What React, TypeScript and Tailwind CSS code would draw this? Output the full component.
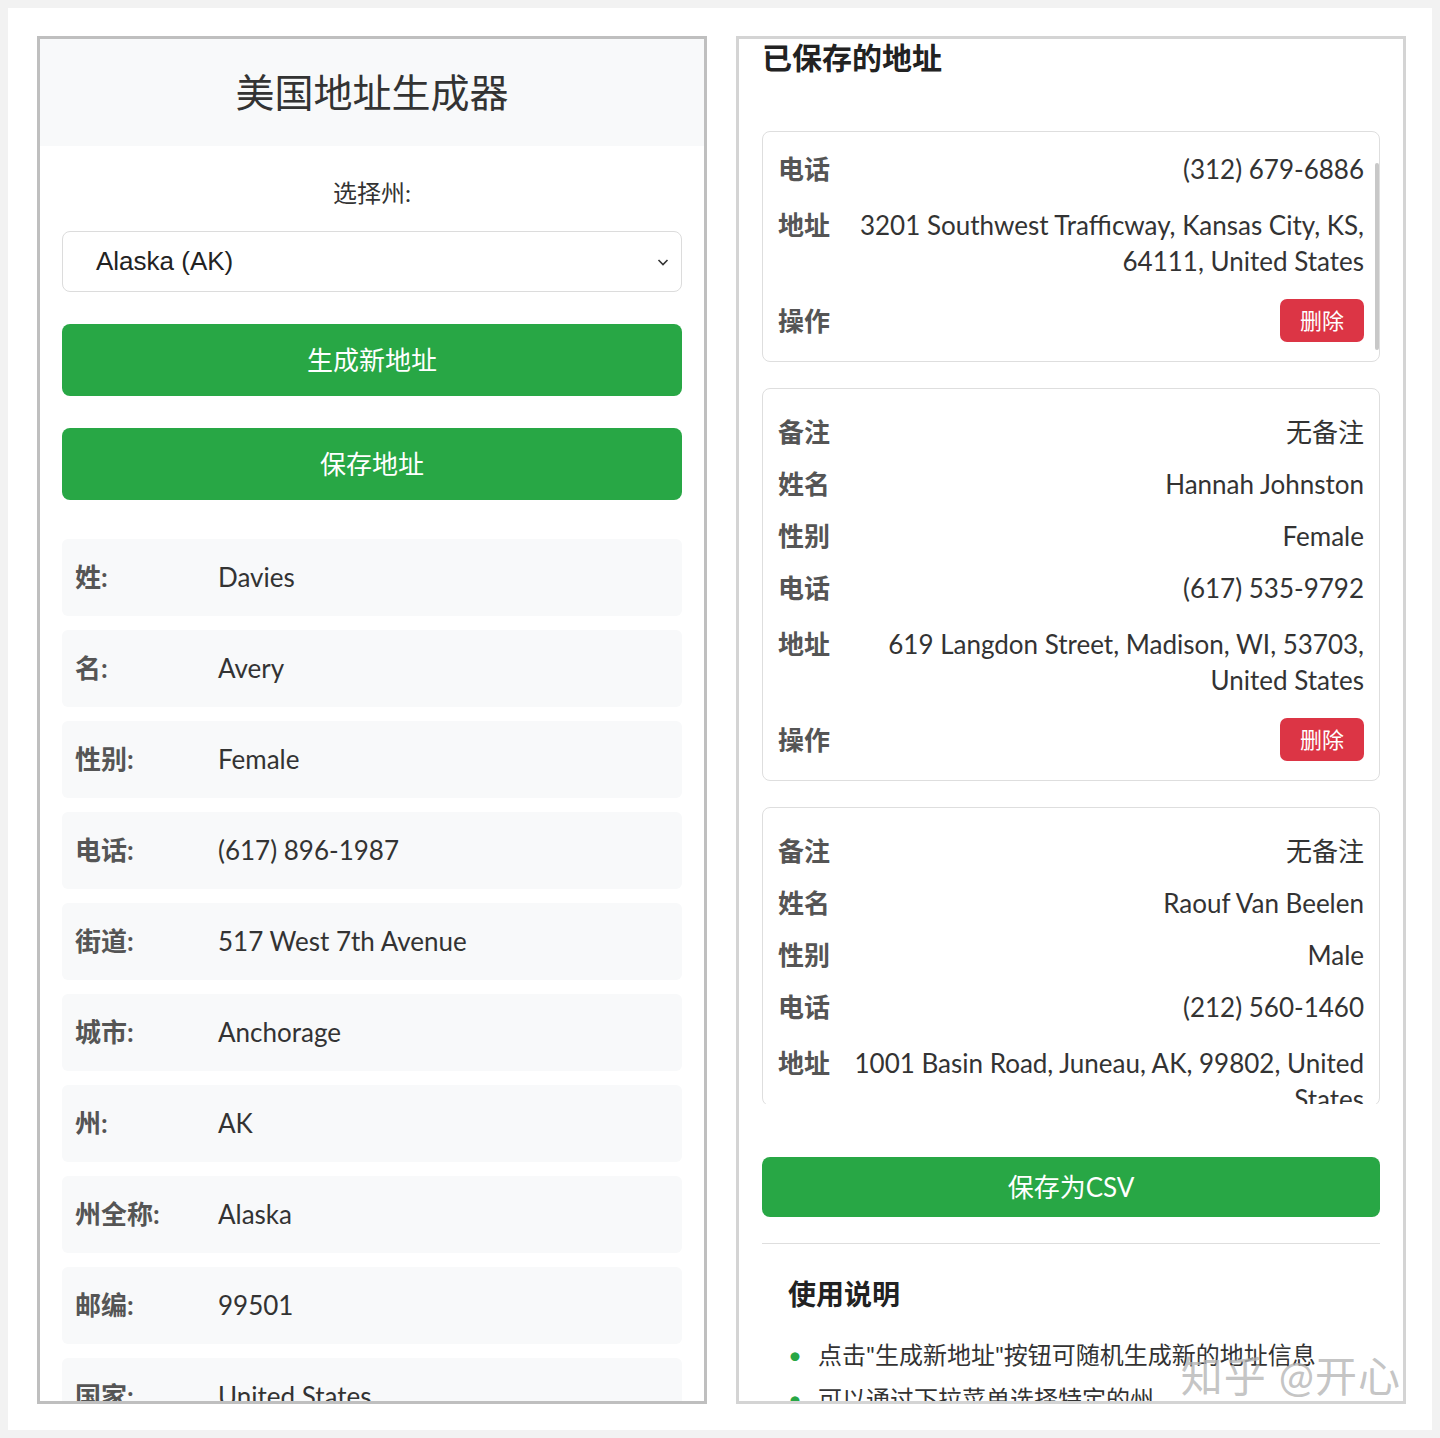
import React from 'react';

const font = { fontFamily: 'Lato, "Noto Sans CJK SC", sans-serif' };

const genRows = [
  { label: '姓:', value: 'Davies' },
  { label: '名:', value: 'Avery' },
  { label: '性别:', value: 'Female' },
  { label: '电话:', value: '(617) 896-1987' },
  { label: '街道:', value: '517 West 7th Avenue' },
  { label: '城市:', value: 'Anchorage' },
  { label: '州:', value: 'AK' },
  { label: '州全称:', value: 'Alaska' },
  { label: '邮编:', value: '99501' },
  { label: '国家:', value: 'United States' },
];

const savedCards = [
  {
    pad: 'pt-[11px]',
    clip: false,
    rows: [
      { label: '电话', value: '(312) 679-6886' },
      { label: '地址', value: '3201 Southwest Trafficway, Kansas City, KS, 64111, United States', multi: true },
    ],
  },
  {
    pad: 'pt-[17px]',
    clip: false,
    rows: [
      { label: '备注', value: '无备注' },
      { label: '姓名', value: 'Hannah Johnston' },
      { label: '性别', value: 'Female' },
      { label: '电话', value: '(617) 535-9792' },
      { label: '地址', value: '619 Langdon Street, Madison, WI, 53703, United States', multi: true },
    ],
  },
  {
    pad: 'pt-[17px]',
    clip: true,
    rows: [
      { label: '备注', value: '无备注' },
      { label: '姓名', value: 'Raouf Van Beelen' },
      { label: '性别', value: 'Male' },
      { label: '电话', value: '(212) 560-1460' },
      { label: '地址', value: '1001 Basin Road, Juneau, AK, 99802, United States', multi: true },
    ],
  },
];

function GeneratorPanel() {
  return (
    <div className="w-[670px] h-[1368px] shrink-0 border-[3px] border-[#bfbfbf] bg-white overflow-hidden flex flex-col">
      {/* ヘッダー */}
      <div className="h-[107px] shrink-0 bg-[#f8f9fa] flex items-center justify-center">
        <h1 className="text-[39px] leading-none text-[#333] font-normal">美国地址生成器</h1>
      </div>

      <div className="shrink-0 px-[22px] flex flex-col">
        <label className="mt-[32px] text-center text-[24px] leading-[30px] text-[#333]">选择州:</label>
        <div className="mt-[23px] h-[61px] rounded-[8px] border border-[#dcdcdc] flex items-center justify-between pl-[33px] pr-[10px]">
          <span className="text-[26px] text-[#222]" style={{ fontFamily: '"Liberation Sans", Arial, sans-serif' }}>
            Alaska (AK)
          </span>
          <svg width="16" height="16" viewBox="0 0 16 16" fill="none" stroke="#333" strokeWidth="1.6">
            <path d="M3.5 6l4.5 4.5L12.5 6" />
          </svg>
        </div>

        <button className="mt-[32px] h-[72px] rounded-[8px] bg-[#28a745] text-white text-[26px]">生成新地址</button>
        <button className="mt-[32px] h-[72px] rounded-[8px] bg-[#28a745] text-white text-[26px]">保存地址</button>

        <div className="mt-[39px] flex flex-col gap-[14px]">
          {genRows.map((r) => (
            <div key={r.label} className="h-[77px] shrink-0 rounded-[6px] bg-[#f8f9fa] flex items-center px-[13px]">
              <span className="w-[143px] shrink-0 text-[26px] font-bold text-[#555]">{r.label}</span>
              <span className="text-[26px] text-[#333]">{r.value}</span>
            </div>
          ))}
        </div>
      </div>
    </div>
  );
}

function SavedPanel() {
  return (
    <div className="relative w-[670px] h-[1368px] shrink-0 border-[3px] border-[#d4d4d4] bg-white overflow-hidden flex flex-col px-[23px]">
      <h2 className="shrink-0 text-[30px] leading-[36px] font-bold text-[#222]">已保存的地址</h2>

      {/* 保存済みリスト */}
      <div className="relative shrink-0 mt-[56px] h-[973px] flex flex-col gap-[26px] overflow-hidden">
        {savedCards.map((card, i) => (
          <div
            key={i}
            className={`shrink-0 rounded-[8px] border border-[#dedede] px-[15px] pb-[11px] ${card.pad} ${
              card.clip ? 'h-[299px] overflow-hidden' : ''
            }`}
          >
            {card.rows.map((r) => (
              <div key={r.label} className={`flex items-start justify-between ${r.multi ? 'py-[12px]' : 'py-[8px]'}`}>
                <span className="shrink-0 text-[26px] leading-[36px] font-bold text-[#555]">{r.label}</span>
                <span className={`text-right text-[26px] leading-[36px] text-[#333] ${r.multi ? 'pl-[10px]' : ''}`}>
                  {r.value}
                </span>
              </div>
            ))}
            {!card.clip && (
              <div className="flex items-center justify-between py-[8px]">
                <span className="text-[26px] leading-[36px] font-bold text-[#555]">操作</span>
                <button className="h-[43px] w-[84px] rounded-[7px] bg-[#dc3545] text-white text-[22px]">删除</button>
              </div>
            )}
          </div>
        ))}
        <div className="absolute right-[1px] top-[32px] w-[4px] h-[187px] rounded-full bg-[#c8c8c8]" />
      </div>

      <button className="mt-[53px] h-[60px] shrink-0 rounded-[8px] bg-[#28a745] text-white text-[26px]">保存为CSV</button>
      <div className="mt-[26px] h-px shrink-0 bg-[#dedede]" />

      <div className="shrink-0 px-[26px]">
        <h3 className="mt-[32px] text-[28px] leading-[36px] font-bold text-[#222]">使用说明</h3>
        <ul className="mt-[28px] flex flex-col gap-[14px]">
          <li className="flex items-center text-[24px] leading-[30px] text-[#333]">
            <span className="w-[30px] shrink-0 text-[#28a745] text-[24px]">•</span>
            点击"生成新地址"按钮可随机生成新的地址信息
          </li>
          <li className="flex items-center text-[24px] leading-[30px] text-[#333]">
            <span className="w-[30px] shrink-0 text-[#28a745] text-[24px]">•</span>
            可以通过下拉菜单选择特定的州
          </li>
        </ul>
      </div>

      <div className="absolute right-[2px] bottom-[4px] text-[42px] leading-none text-[#b5b5b5]/80 tracking-wide">
        知乎 @开心
      </div>
    </div>
  );
}

export default function App() {
  return (
    <div className="w-[1440px] h-[1438px] bg-[#f2f2f2] p-[8px]" style={font}>
      <div className="h-full bg-white flex gap-[29px] pl-[29px] pt-[28px]">
        <GeneratorPanel />
        <SavedPanel />
      </div>
    </div>
  );
}
